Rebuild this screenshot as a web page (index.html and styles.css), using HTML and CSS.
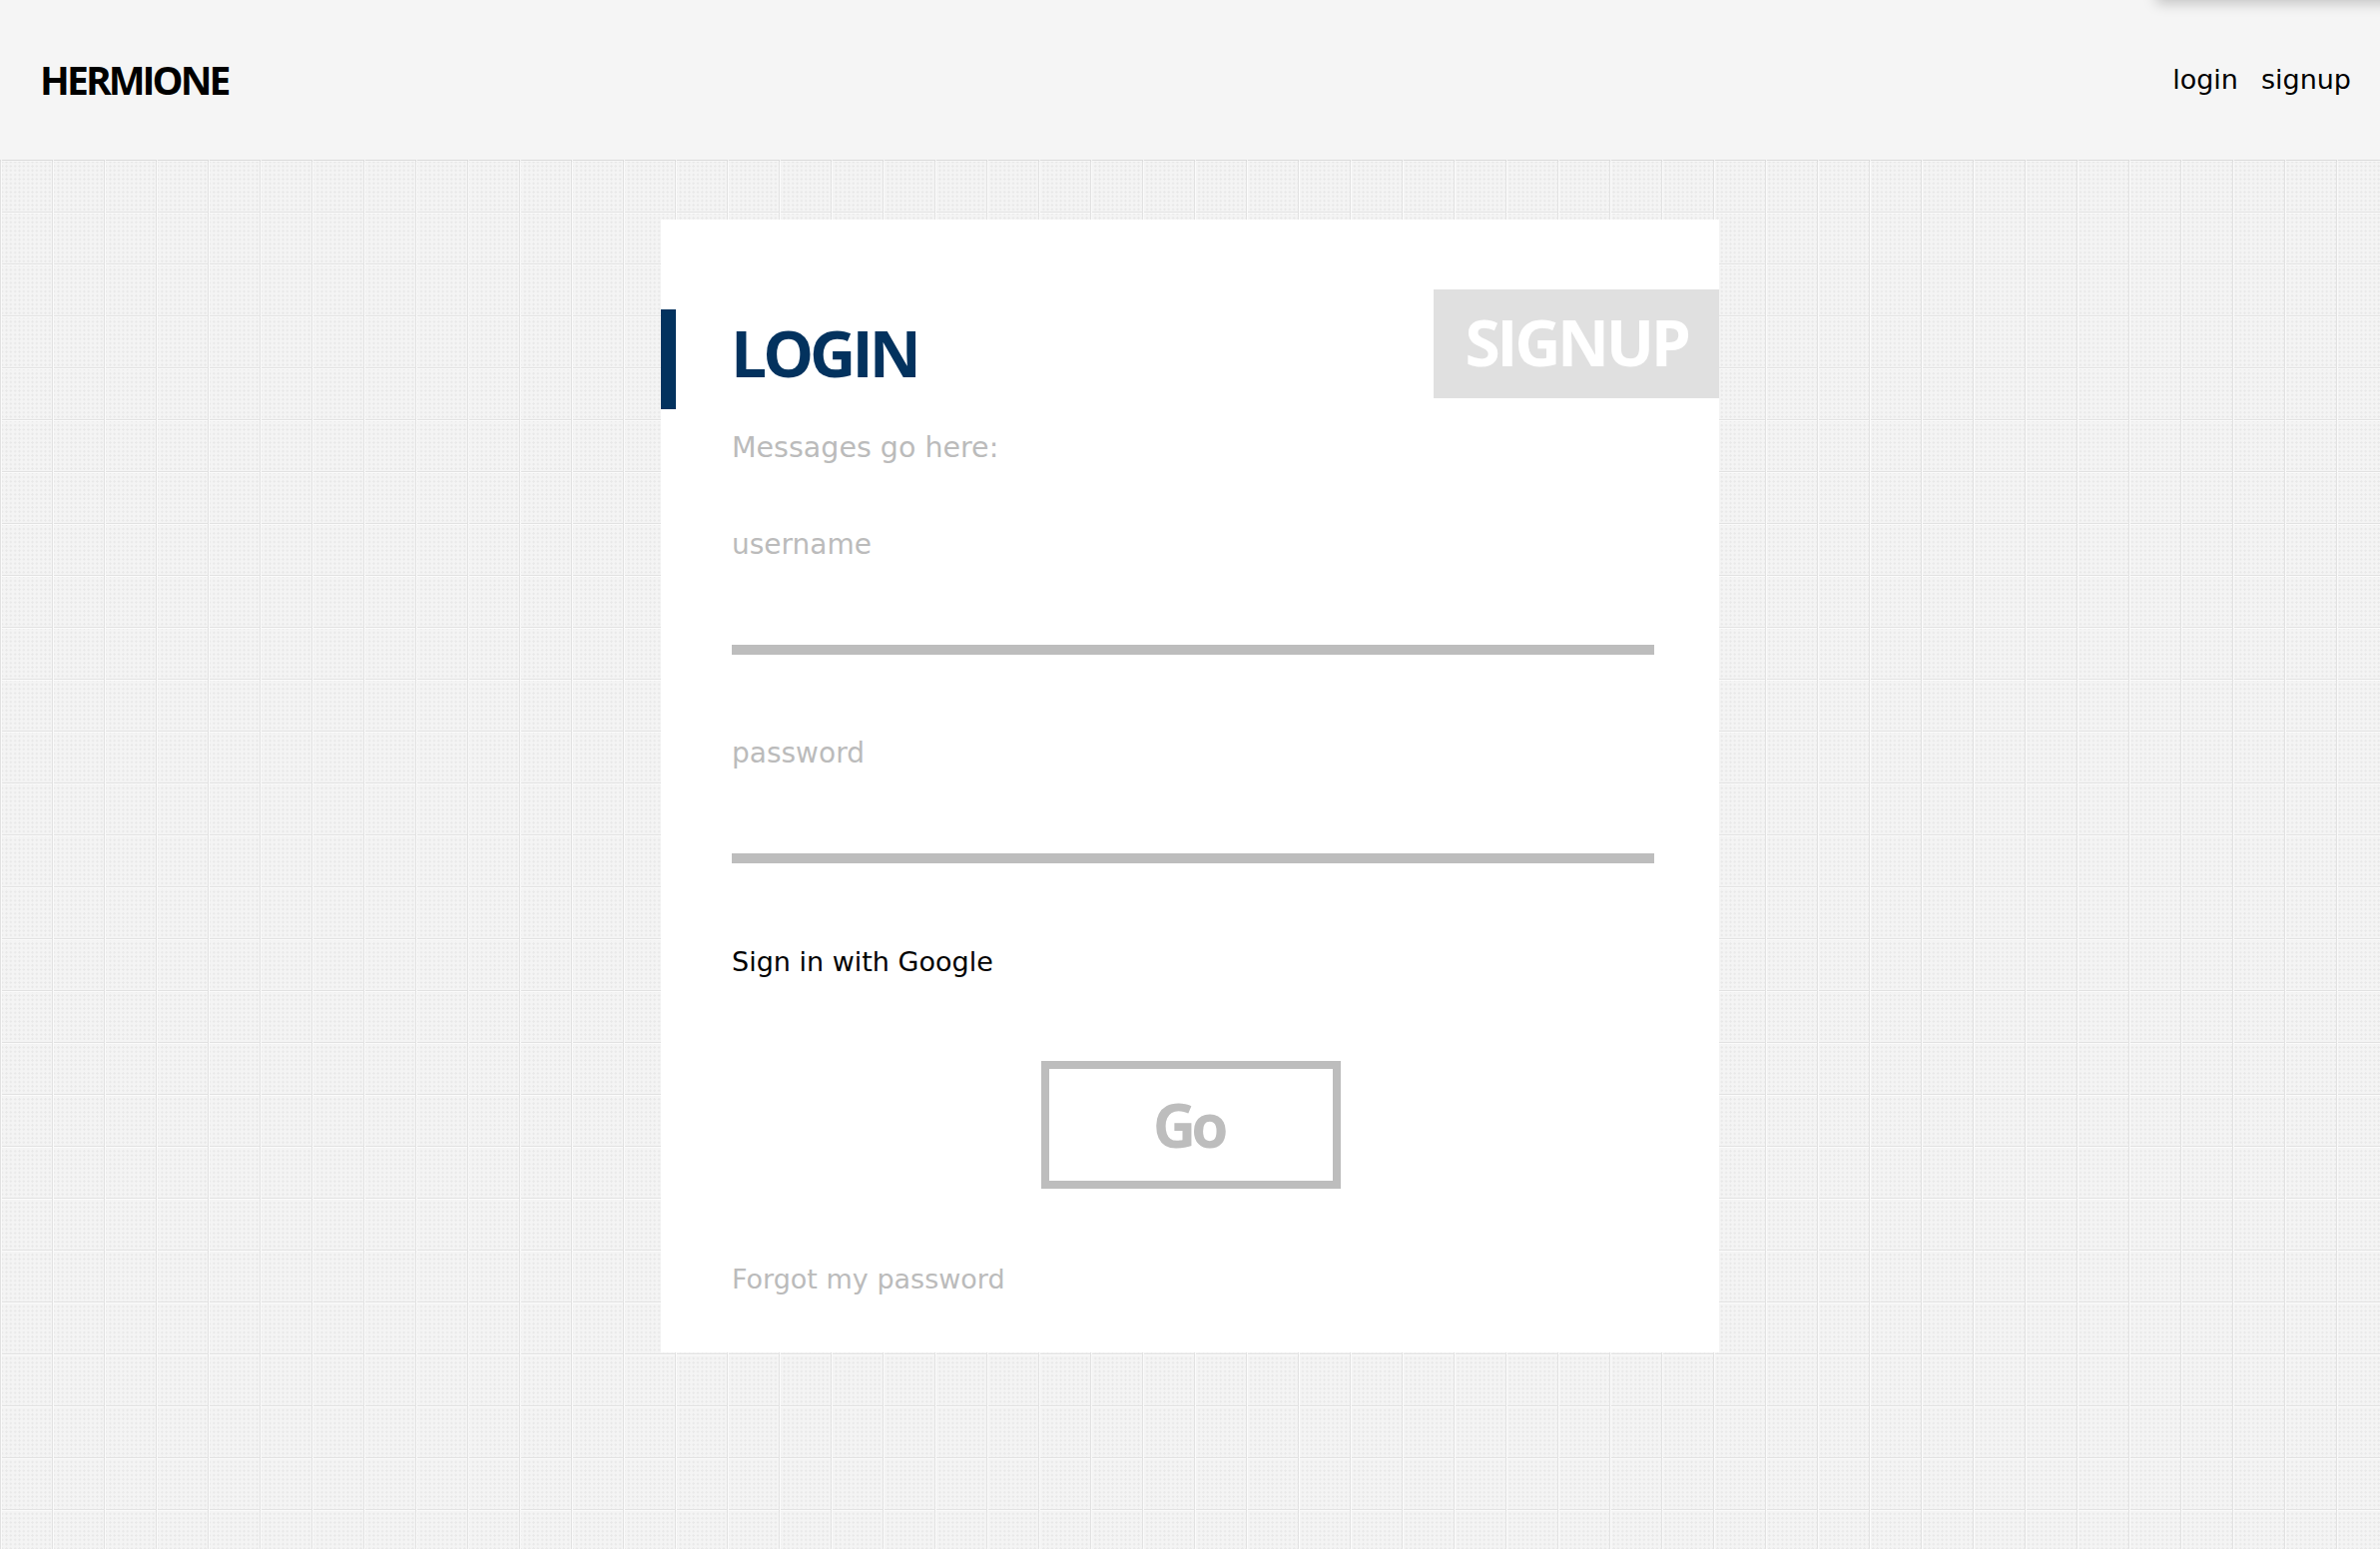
FILE: index.html
```html
<!DOCTYPE html>
<html lang="en">
<head>
<meta charset="utf-8">
<title>Hermione</title>
<link rel="stylesheet" href="styles.css">
</head>
<body>
<div class="top-shadow"></div>
<header class="topbar">
  <div class="brand">HERMIONE</div>
  <nav class="nav">
    <a class="nav-link" href="#">login</a>
    <a class="nav-link" href="#">signup</a>
  </nav>
</header>
<main class="stage">
  <section class="card">
    <a class="signup-tab" href="#">SIGNUP</a>
    <h1 class="title">LOGIN</h1>
    <div class="content">
      <p class="messages">Messages go here:</p>
      <div class="field">
        <label class="field-label" for="u">username</label>
        <input class="field-input" id="u" type="text">
      </div>
      <div class="field">
        <label class="field-label" for="p">password</label>
        <input class="field-input" id="p" type="password">
      </div>
      <a class="google" href="#">Sign in with Google</a>
      <button class="go" type="button">Go</button>
      <a class="forgot" href="#">Forgot my password</a>
    </div>
  </section>
</main>
</body>
</html>
```
FILE: styles.css
```css
html, body {
  margin: 0;
  padding: 0;
}
body {
  width: 2384px;
  min-height: 1552px;
  font-family: "DejaVu Sans", "Liberation Sans", sans-serif;
  background-color: #f4f4f4;
  background-image:
    linear-gradient(to right, #e2e2e2 0 1px, #fbfbfb 1px 2px, transparent 2px),
    linear-gradient(to bottom, #e2e2e2 0 1px, #fbfbfb 1px 2px, transparent 2px),
    radial-gradient(circle, #e8e8e8 0.9px, transparent 1.3px);
  background-size: 52px 52px, 52px 52px, 4.333px 4.333px;
  background-position: 0 160px, 0 160px, 0 160px;
  position: relative;
  overflow: hidden;
}
.top-shadow {
  position: absolute;
  top: -24px;
  left: 2160px;
  width: 300px;
  height: 24px;
  box-shadow: 0 3px 14px rgba(0, 0, 0, 0.22);
  background: #f5f5f5;
  z-index: 2;
}
.topbar {
  height: 160px;
  box-sizing: border-box;
  background: #f5f5f5;
  display: flex;
  align-items: center;
  justify-content: space-between;
  padding: 0 29px 0 40px;
  box-shadow: 0 1px 3px rgba(0, 0, 0, 0.05);
  position: relative;
}
.brand {
  font-family: "Open Sans", "Noto Sans", sans-serif;
  font-weight: 700;
  font-size: 39px;
  letter-spacing: -2.9px;
  color: #000;
  margin-top: -2px;
}
.nav {
  display: flex;
  gap: 23px;
  margin-top: -2px;
}
.nav-link {
  font-size: 27px;
  color: #000;
  text-decoration: none;
}
.stage {
  padding: 60px 0 196px;
}
.card {
  width: 1060px;
  margin: 0 auto;
  background: #fff;
  position: relative;
  padding: 90px 0 57px;
  box-sizing: border-box;
}
.signup-tab {
  position: absolute;
  top: 70px;
  right: 0;
  width: 286px;
  height: 109px;
  background: #e0e0e0;
  color: #fff;
  font-family: "Open Sans", "Noto Sans", sans-serif;
  font-weight: 700;
  font-size: 64px;
  letter-spacing: -3.4px;
  line-height: 106px;
  text-align: center;
  text-decoration: none;
}
.title {
  margin: 0;
  height: 100px;
  border-left: 15px solid #03325e;
  padding-left: 55px;
  font-family: "Open Sans", "Noto Sans", sans-serif;
  font-weight: 700;
  font-size: 64px;
  letter-spacing: -4px;
  line-height: 88px;
  color: #03325e;
  box-sizing: border-box;
}
.content {
  padding: 0 65px 0 71px;
  display: flex;
  flex-direction: column;
  align-items: flex-start;
}
.messages {
  margin: 24px 0 0;
  font-size: 28.5px;
  line-height: 30px;
  color: #bbbbbb;
}
.field {
  display: flex;
  flex-direction: column;
  width: 100%;
  margin-top: 65px;
}
.field + .field {
  margin-top: 82px;
}
.field-label {
  font-size: 28px;
  line-height: 34px;
  color: #bbbbbb;
}
.field-input {
  width: 100%;
  height: 93px;
  box-sizing: border-box;
  border: 0;
  border-bottom: 10px solid #bdbdbd;
  background: transparent;
  outline: none;
  padding: 0;
  font-size: 28px;
  font-family: inherit;
}
.google {
  margin-top: 83px;
  font-size: 27px;
  line-height: 32px;
  color: #000;
  text-decoration: none;
}
.go {
  align-self: center;
  margin: 83px 4px 0 0;
  width: 300px;
  height: 128px;
  border: 8px solid #bdbdbd;
  background: #fff;
  color: #bdbdbd;
  font-family: "Open Sans", "Noto Sans", sans-serif;
  font-weight: 700;
  font-size: 60px;
  letter-spacing: -5px;
  text-indent: -6px;
  line-height: 1;
  padding: 0;
  cursor: pointer;
}
.forgot {
  margin-top: 75px;
  font-size: 27px;
  line-height: 32px;
  color: #bbbbbb;
  text-decoration: none;
}
```
